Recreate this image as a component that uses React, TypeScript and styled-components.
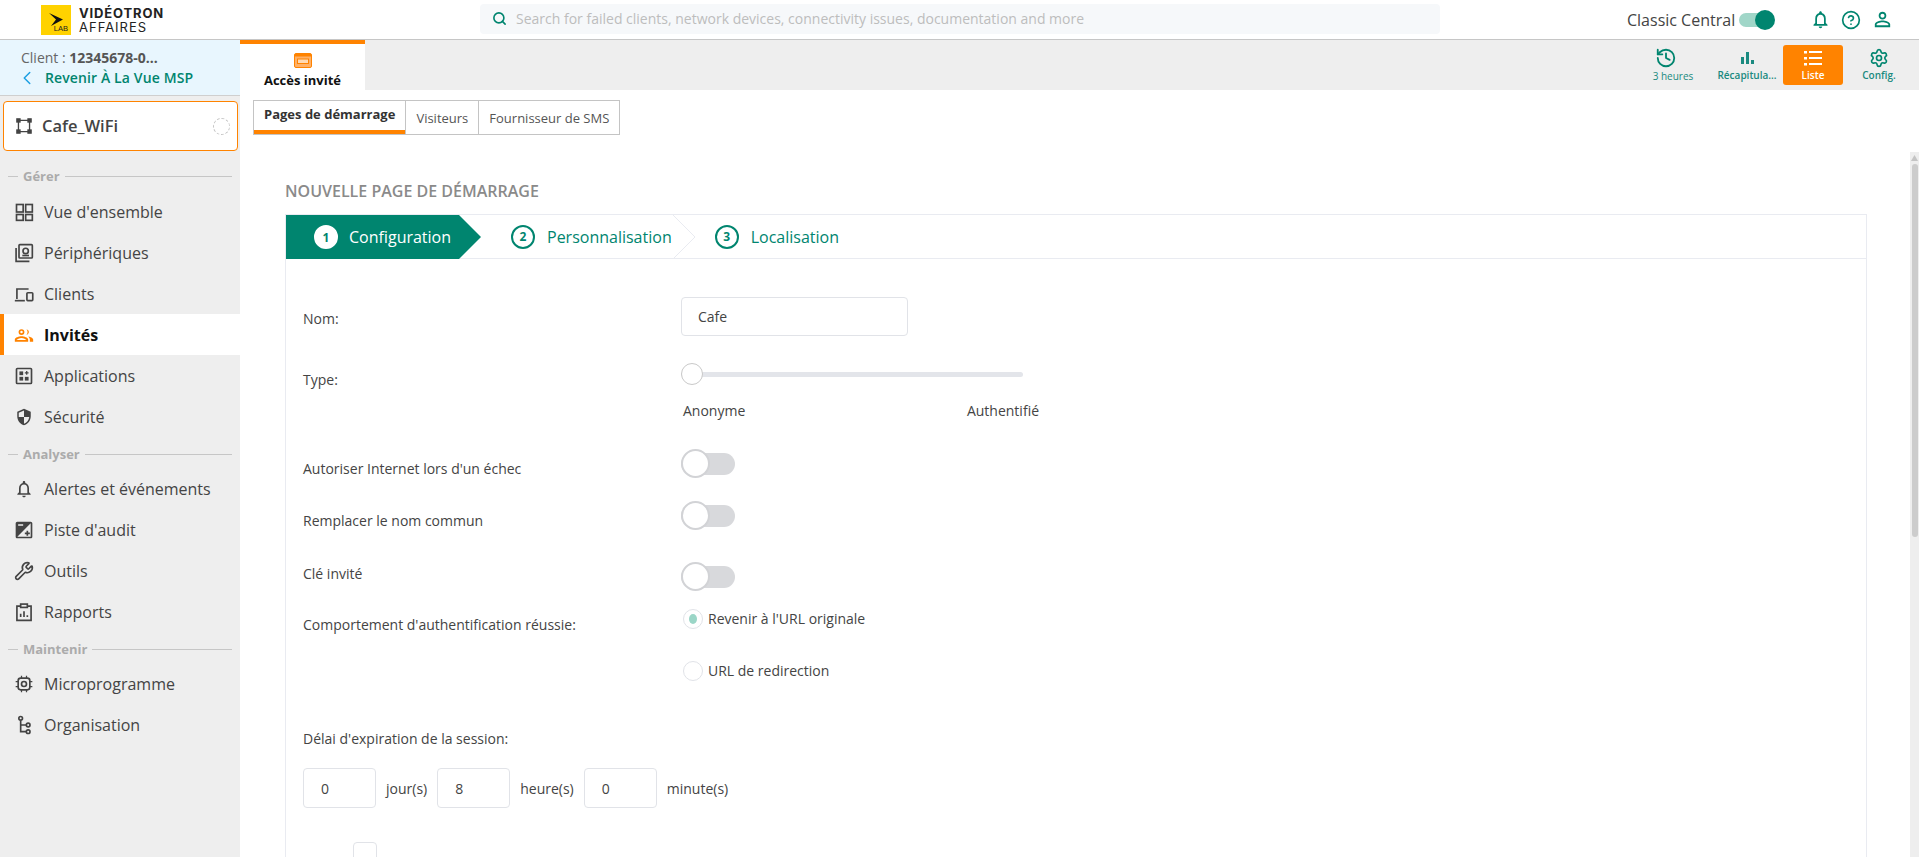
import React from "react";
import styled, { createGlobalStyle } from "styled-components";
import { History, CircleHelp, Settings, Search, Wrench, ChevronLeft } from "lucide-react";

const TEAL = "#00856f";
const ORANGE = "#ff8300";

const Global = createGlobalStyle`
  html, body { margin: 0; padding: 0; height: 100%; overflow: hidden; background: #fff; }
  body { font-family: "Open Sans", "Liberation Sans", sans-serif; color: #444; }
  * { box-sizing: border-box; }
`;

const Page = styled.div`
  display: flex;
  flex-direction: column;
  height: 100vh;
`;

const TopBar = styled.header`
  flex: 0 0 40px;
  display: flex;
  align-items: center;
  background: #fff;
  border-bottom: 1px solid #c6c6c6;
`;

const Logo = styled.div`
  display: flex;
  align-items: center;
  gap: 8px;
  width: 480px;
  padding-left: 41px;
`;

const LogoMark = styled.div`
  position: relative;
  width: 30px;
  height: 30px;
  background: #ffd200;
`;

const LogoLab = styled.span`
  position: absolute;
  right: 3px;
  bottom: 2px;
  font: 400 7.5px/8px "Liberation Sans", sans-serif;
  color: #222;
`;

const LogoWords = styled.div`
  display: flex;
  flex-direction: column;
  font-family: Inter, "Liberation Sans", sans-serif;
  color: #222;
`;

const LogoStrong = styled.span`
  font-size: 13px;
  line-height: 14px;
  font-weight: 700;
  letter-spacing: 0.85px;
`;

const LogoLight = styled.span`
  font-size: 13px;
  line-height: 14px;
  font-weight: 400;
  letter-spacing: 1px;
`;

const SearchBox = styled.div`
  width: 960px;
  height: 30px;
  margin-top: -2px;
  display: flex;
  align-items: center;
  gap: 9px;
  padding-left: 12px;
  background: #f6f8fa;
  border-radius: 4px;
  color: ${TEAL};
`;

const SearchText = styled.span`
  font-size: 14px;
  color: #bdbdbd;
`;

const TopRight = styled.div`
  margin-left: 187px;
  display: flex;
  align-items: center;
`;

const ClassicLabel = styled.span`
  font-size: 16px;
  color: #444;
  white-space: nowrap;
`;

const ClassicToggle = styled.span`
  position: relative;
  display: block;
  width: 30px;
  height: 14px;
  margin-left: 4px;
  margin-right: 41px;
  border-radius: 7px;
  background: #a0d6c8;
`;

const ClassicKnob = styled.span`
  position: absolute;
  right: -6px;
  top: -3px;
  width: 20px;
  height: 20px;
  border-radius: 50%;
  background: ${TEAL};
`;

const TopIcons = styled.div`
  display: flex;
  align-items: center;
  gap: 10px;
  color: ${TEAL};
`;

const Body = styled.div`
  flex: 1;
  min-height: 0;
  display: flex;
`;

const Sidebar = styled.aside`
  flex: 0 0 240px;
  background: #eeeeee;
`;

const ClientBox = styled.div`
  height: 56px;
  padding: 8px 0 0 21px;
  background: #e8f6fe;
  border-bottom: 1px solid #cfcfcf;
`;

const ClientLine = styled.div`
  font-size: 14px;
  line-height: 19px;
  color: #666;
  b { color: #555; font-weight: 700; font-size: 14px; }
`;

const BackLine = styled.div`
  display: flex;
  align-items: center;
  gap: 7px;
  font-size: 14px;
  line-height: 20px;
  font-weight: 600;
  letter-spacing: 0.12px;
  color: ${TEAL};
  svg { color: #1b9fe2; margin-left: -5px; }
`;

const SiteCard = styled.div`
  height: 50px;
  margin: 5px 2px 0 3px;
  padding: 0 7px 0 12px;
  display: flex;
  align-items: center;
  gap: 10px;
  background: #fff;
  border: 1px solid ${ORANGE};
  border-radius: 4px;
  font-size: 16.5px;
  font-weight: 600;
  color: #444;
`;

const SiteName = styled.span`
  flex: 1;
  margin-top: -1px;
`;

const Spinner = styled.span`
  width: 17px;
  height: 17px;
  border-radius: 50%;
  border: 1.5px dashed #c4c4c4;
`;

const NavSection = styled.div<{ $first?: boolean }>`
  display: flex;
  align-items: center;
  gap: 5px;
  height: 20px;
  margin: ${(p) => (p.$first ? "15px 8px 5px" : "7px 8px 4px")};
  font-size: 13px;
  font-weight: 700;
  color: #ababab;
  &::before { content: ""; width: 10px; height: 1px; background: #c6c6c6; }
  &::after { content: ""; flex: 1; height: 1px; background: #c6c6c6; }
`;

const NavItem = styled.div<{ $active?: boolean }>`
  height: 41px;
  display: flex;
  align-items: center;
  gap: 10px;
  padding-left: 14px;
  font-size: 16px;
  color: ${(p) => (p.$active ? "#111" : "#444")};
  font-weight: ${(p) => (p.$active ? 700 : 400)};
  background: ${(p) => (p.$active ? "#fff" : "transparent")};
  box-shadow: ${(p) => (p.$active ? `inset 4px 0 0 ${ORANGE}` : "none")};
  svg { color: ${(p) => (p.$active ? ORANGE : "#444")}; flex: 0 0 20px; }
`;

const Main = styled.main`
  flex: 1;
  min-width: 0;
  display: flex;
  flex-direction: column;
`;

const AppBar = styled.div`
  flex: 0 0 50px;
  display: flex;
  justify-content: space-between;
  background: #eeeeee;
`;

const AppTab = styled.div`
  width: 125px;
  display: flex;
  flex-direction: column;
  align-items: center;
  border-top: 4px solid ${ORANGE};
  padding-top: 9px;
  background: #fff;
  font-size: 13px;
  line-height: 18px;
  font-weight: 700;
  color: #111;
  svg { color: ${ORANGE}; margin-bottom: 3px; }
`;

const ToolGroup = styled.div`
  display: flex;
  align-items: center;
  gap: 6px;
  padding-right: 10px;
`;

const ToolButton = styled.div<{ $active?: boolean; $light?: boolean; $spaced?: boolean }>`
  width: 60px;
  height: 40px;
  margin-right: ${(p) => (p.$spaced ? "8px" : "0")};
  display: flex;
  flex-direction: column;
  align-items: center;
  justify-content: center;
  border-radius: 3px;
  background: ${(p) => (p.$active ? ORANGE : "transparent")};
  color: ${(p) => (p.$active ? "#fff" : "#1a8a80")};
  font-size: 10px;
  line-height: 14px;
  font-weight: ${(p) => (p.$light ? 400 : 600)};
  white-space: nowrap;
`;

const OffsetHistory = styled(History)`
  margin-left: -14px;
`;

const Content = styled.div`
  flex: 1;
  min-height: 0;
  display: flex;
  flex-direction: column;
`;

const SubTabs = styled.div`
  flex: 0 0 62px;
  padding: 10px 0 0 13px;
`;

const SubTabList = styled.div`
  display: inline-flex;
  height: 35px;
  border: 1px solid #c4c4c4;
`;

const SubTab = styled.div<{ $active?: boolean }>`
  display: flex;
  align-items: center;
  padding: ${(p) => (p.$active ? "0 10px 4px" : "0 10px")};
  border-left: ${(p) => (p.$active ? "none" : "1px solid #c4c4c4")};
  border-bottom: ${(p) => (p.$active ? `4px solid ${ORANGE}` : "none")};
  font-size: 13px;
  color: ${(p) => (p.$active ? "#333" : "#555")};
  font-weight: ${(p) => (p.$active ? 700 : 400)};
`;

const ScrollRow = styled.div`
  flex: 1;
  min-height: 0;
  display: flex;
`;

const ScrollArea = styled.div`
  flex: 1;
  min-width: 0;
  overflow: hidden;
  padding: 0 43px 0 45px;
`;

const ScrollTrack = styled.div`
  flex: 0 0 9px;
  display: flex;
  flex-direction: column;
  align-items: center;
  background: #eeeeee;
  padding-top: 3px;
  color: #c4c4c4;
`;

const ScrollThumb = styled.div`
  width: 6px;
  height: 373px;
  margin-top: 3px;
  border-radius: 3px;
  background: #cccccc;
`;

const Heading = styled.h2`
  margin: 29px 0 13px;
  font-size: 16px;
  line-height: 20px;
  font-weight: 600;
  color: #8a8a8a;
`;

const Wizard = styled.section`
  min-height: 1225px;
  border: 1px solid #e9ebf1;
`;

const StepBar = styled.div`
  height: 44px;
  display: flex;
  align-items: center;
  border-bottom: 1px solid #e9ebf1;
  color: ${TEAL};
  font-size: 16px;
`;

const ActiveStep = styled.div`
  align-self: stretch;
  flex: 0 0 195px;
  display: flex;
  align-items: center;
  gap: 11px;
  padding-left: 28px;
  margin-bottom: -1px;
  background: ${TEAL};
  color: #fff;
  clip-path: polygon(0 0, 173px 0, 100% 50%, 173px 100%, 0 100%);
`;

const Step = styled.div<{ $left: number }>`
  display: flex;
  align-items: center;
  gap: 12px;
  margin-left: ${(p) => p.$left}px;
`;

const StepNumber = styled.span<{ $inverse?: boolean }>`
  width: 24px;
  height: 24px;
  display: flex;
  align-items: center;
  justify-content: center;
  border-radius: 50%;
  border: 2px solid ${(p) => (p.$inverse ? "#fff" : TEAL)};
  background: ${(p) => (p.$inverse ? "#fff" : "transparent")};
  color: ${TEAL};
  font-size: 12px;
  font-weight: 700;
`;

const StepChevron = styled.svg`
  flex: 0 0 23px;
  margin-left: 1px;
`;

const Form = styled.div`
  padding: 38px 0 0 17px;
  font-size: 14px;
  color: #444;
`;

const Row = styled.div<{ $top?: number }>`
  display: grid;
  grid-template-columns: 378px 1fr;
  align-items: start;
  margin-top: ${(p) => p.$top ?? 0}px;
`;

const Label = styled.label<{ $pad: number }>`
  padding-top: ${(p) => p.$pad}px;
  line-height: 20px;
  white-space: nowrap;
`;

const TextField = styled.div`
  width: 227px;
  height: 39px;
  padding-left: 16px;
  display: flex;
  align-items: center;
  border: 1px solid #e1e3e8;
  border-radius: 4px;
`;

const Slider = styled.div`
  position: relative;
  width: 342px;
  height: 22px;
  display: flex;
  align-items: center;
`;

const SliderTrack = styled.div`
  width: 100%;
  height: 5px;
  background: #e3e5ea;
  border-radius: 3px;
`;

const SliderThumb = styled.span`
  position: absolute;
  left: 0;
  top: 0;
  width: 22px;
  height: 22px;
  border-radius: 50%;
  background: #fff;
  border: 1px solid #c9c9c9;
`;

const SliderLabels = styled.div`
  width: 358px;
  margin-top: 16px;
  padding-left: 2px;
  display: flex;
  justify-content: space-between;
  line-height: 20px;
`;

const Toggle = styled.div`
  position: relative;
  width: 54px;
  height: 29px;
  display: flex;
  align-items: center;
`;

const ToggleTrack = styled.div`
  width: 100%;
  height: 22px;
  border-radius: 11px;
  background: #d8d9dc;
`;

const ToggleKnob = styled.span`
  position: absolute;
  left: 0;
  top: 0;
  width: 29px;
  height: 29px;
  border-radius: 50%;
  background: #fff;
  border: 2px solid #d2d3d6;
`;

const RadioGroup = styled.div`
  display: flex;
  flex-direction: column;
  gap: 32px;
  padding-left: 2px;
`;

const RadioLine = styled.div`
  display: flex;
  align-items: center;
  gap: 5px;
  height: 20px;
  line-height: 20px;
`;

const Radio = styled.span<{ $checked?: boolean }>`
  width: 20px;
  height: 20px;
  display: flex;
  align-items: center;
  justify-content: center;
  border-radius: 50%;
  border: 1px solid #e1e3e8;
  &::after {
    content: "";
    display: ${(p) => (p.$checked ? "block" : "none")};
    width: 8px;
    height: 10px;
    border-radius: 50%;
    background: #9bd6c7;
  }
`;

const PlainLabel = styled.div`
  margin-top: 48px;
  line-height: 20px;
`;

const DurationRow = styled.div`
  display: flex;
  align-items: center;
  gap: 10px;
  margin-top: 19px;
`;

const DurationField = styled.div`
  width: 73px;
  height: 40px;
  padding-left: 17px;
  display: flex;
  align-items: center;
  border: 1px solid #e1e3e8;
  border-radius: 4px;
`;

const CheckBox = styled.div`
  width: 24px;
  height: 24px;
  margin: 34px 0 0 50px;
  border: 1px solid #e1e3e8;
  border-radius: 4px;
`;

type IconProps = { size?: number };
const Svg = ({ size = 20, children, fill = "none" }: IconProps & { children: React.ReactNode; fill?: string }) => (
  <svg width={size} height={size} viewBox="0 0 24 24" fill={fill} stroke={fill === "none" ? "currentColor" : "none"} strokeWidth="2">
    {children}
  </svg>
);

const DashIcon = () => (
  <Svg>
    <rect x="3" y="3" width="8" height="9" />
    <rect x="14" y="3" width="8" height="9" />
    <rect x="3" y="15" width="8" height="7" />
    <rect x="14" y="15" width="8" height="7" />
  </Svg>
);
const DevicesIcon = () => (
  <Svg>
    <rect x="6" y="2" width="16" height="16" rx="1" />
    <circle cx="14" cy="9.5" r="3.2" />
    <path d="M10 15h8" />
    <path d="M2.5 6v16h16" />
  </Svg>
);
const ClientsIcon = () => (
  <Svg>
    <path d="M3.5 18V6h14" />
    <path d="M1 20h12" />
    <rect x="15.5" y="10.5" width="7" height="9.5" rx="1" />
  </Svg>
);
const GuestsIcon = () => (
  <Svg fill="currentColor">
    <path d="M9 5a3.5 3.5 0 1 0 0 7 3.5 3.5 0 0 0 0-7zm0 2a1.5 1.5 0 1 1 0 3 1.5 1.5 0 0 1 0-3z" />
    <path d="M15 5.1c1.6.4 2.8 1.8 2.8 3.4s-1.2 3-2.8 3.4c.8-.9 1.3-2.1 1.3-3.4S15.8 6 15 5.1z" />
    <path d="M9 13.5c-3 0-8 1.5-8 4V20h16v-2.500c0-2.500-5-4-8-4zM3 18c.5-1 3.700-2.500 6-2.500s5.500 1.500 6 2.500H3z" />
    <path d="M17 13.700c2.600.4 6 1.500 6 3.800V20h-4v-2.500c0-1.500-.8-2.800-2-3.800z" />
  </Svg>
);
const AppsIcon = () => (
  <svg width="20" height="20" viewBox="0 0 24 24">
    <rect x="3" y="3" width="18" height="18" rx="1" fill="none" stroke="currentColor" strokeWidth="2" />
    <g fill="currentColor">
      <rect x="6.5" y="6.5" width="4.5" height="4.5" />
      <rect x="6.5" y="13" width="4.5" height="4.5" />
      <rect x="13" y="13" width="4.5" height="4.5" />
      <path d="M14.5 6h1.500v1.500h1.500v1.500H16v1.500h-1.500V9H13V7.500h1.500z" />
    </g>
  </svg>
);
const ShieldIcon = () => (
  <Svg size={18} fill="currentColor">
    <path d="M12 1 3 5v6c0 5.550 3.840 10.740 9 12 5.160-1.260 9-6.450 9-12V5l-9-4zm0 10.990h7c-.530 4.120-3.280 7.790-7 8.940V12H5V6.300l7-3.110v8.800z" />
  </Svg>
);
const BellPath = "M12 22c1.100 0 2-.900 2-2h-4c0 1.100.900 2 2 2zm6-6v-5c0-3.070-1.630-5.640-4.500-6.320V4c0-.830-.670-1.500-1.500-1.500s-1.500.670-1.500 1.500v.680C7.640 5.360 6 7.920 6 11v5l-2 2v1h16v-1l-2-2zm-2 1H8v-6c0-2.480 1.510-4.500 4-4.500s4 2.020 4 4.500v6z";
const BellIcon = ({ size = 20 }: IconProps) => (
  <Svg size={size} fill="currentColor">
    <path d={BellPath} />
  </Svg>
);
const AuditIcon = () => (
  <Svg fill="currentColor">
    <path d="M15 17v2h2v-2h2v-2h-2v-2h-2v2h-2v2h2zm5-15H4c-1.100 0-2 .900-2 2v16c0 1.100.900 2 2 2h16c1.100 0 2-.900 2-2V4c0-1.100-.900-2-2-2zM5 5h6v2H5V5zm15 15H4L20 4v16z" />
  </Svg>
);
const ReportIcon = () => (
  <Svg>
    <path d="M8 5H3.500v17h17V5H16" />
    <rect x="8" y="2.500" width="8" height="4" />
    <path d="M8 18v-4M12 18v-7M16 18v-2" />
  </Svg>
);
const ChipIcon = () => (
  <Svg>
    <rect x="5" y="5" width="14" height="14" rx="3" />
    <circle cx="12" cy="12" r="3" />
    <path d="M9 2v3M15 2v3M9 19v3M15 19v3M2 9h3M2 15h3M19 9h3M19 15h3" strokeWidth="1.500" />
  </Svg>
);
const OrgIcon = () => (
  <Svg>
    <circle cx="8" cy="4" r="2.200" />
    <circle cx="17" cy="12" r="2.200" />
    <circle cx="17" cy="20" r="2.200" />
    <path d="M8 6.500V20h6.500M8 12h6.500" />
  </Svg>
);
const NetIcon = () => (
  <svg width="16" height="16" viewBox="0 0 18 18" fill="none" stroke="currentColor" strokeWidth="1.500">
    <rect x="1" y="1" width="3.500" height="3.500" fill="#444" />
    <rect x="13.500" y="1" width="3.500" height="3.500" fill="#444" />
    <rect x="1" y="13.500" width="3.500" height="3.500" fill="#444" />
    <rect x="13.500" y="13.500" width="3.500" height="3.500" fill="#444" />
    <path d="M4.500 2.750h9M4.500 15.250h9M2.750 4.500v9M15.250 4.500v9" />
  </svg>
);
const PortalIcon = () => (
  <svg width="18" height="15" viewBox="0 0 18 15">
    <rect x="0.5" y="0.5" width="17" height="14" rx="1.500" fill="#ffb066" stroke="currentColor" />
    <rect x="1" y="1" width="16" height="2.500" fill="currentColor" />
    <rect x="3.5" y="6" width="11" height="4.500" fill="#ffd9b3" stroke="currentColor" />
  </svg>
);
const UserIcon = ({ size = 20 }: IconProps) => (
  <Svg size={size} fill="currentColor">
    <path d="M12 5.900c1.160 0 2.100.940 2.100 2.100s-.940 2.100-2.100 2.100S9.900 9.160 9.900 8s.940-2.100 2.100-2.100m0 9c2.970 0 6.100 1.460 6.100 2.100v1.100H5.900V17c0-.640 3.130-2.100 6.100-2.100M12 4C9.790 4 8 5.790 8 8s1.790 4 4 4 4-1.790 4-4-1.790-4-4-4zm0 9c-2.670 0-8 1.340-8 4v3h16v-3c0-2.660-5.330-4-8-4z" />
  </Svg>
);
const BarsIcon = () => (
  <svg width="20" height="20" viewBox="0 0 20 20" fill="currentColor">
    <rect x="4" y="9" width="3" height="7" />
    <rect x="9" y="4" width="3" height="12" />
    <rect x="14" y="12" width="3" height="4" />
  </svg>
);
const ListIcon = () => (
  <svg width="20" height="20" viewBox="0 0 20 20" fill="currentColor">
    <rect x="1" y="3" width="3" height="2.500" />
    <rect x="6" y="3" width="13" height="2" />
    <rect x="1" y="9" width="3" height="2.500" />
    <rect x="6" y="9" width="13" height="2" />
    <rect x="1" y="15" width="3" height="2.500" />
    <rect x="6" y="15" width="13" height="2" />
  </svg>
);

const navTop = [
  { label: "Vue d'ensemble", icon: <DashIcon /> },
  { label: "Périphériques", icon: <DevicesIcon /> },
  { label: "Clients", icon: <ClientsIcon /> },
  { label: "Invités", icon: <GuestsIcon />, active: true },
  { label: "Applications", icon: <AppsIcon /> },
  { label: "Sécurité", icon: <ShieldIcon /> },
];
const navMid = [
  { label: "Alertes et événements", icon: <BellIcon /> },
  { label: "Piste d'audit", icon: <AuditIcon /> },
  { label: "Outils", icon: <Wrench size={20} strokeWidth={2} /> },
  { label: "Rapports", icon: <ReportIcon /> },
];
const navBottom = [
  { label: "Microprogramme", icon: <ChipIcon /> },
  { label: "Organisation", icon: <OrgIcon /> },
];

type NavEntry = { label: string; icon: React.ReactNode; active?: boolean };
const NavList = ({ items }: { items: NavEntry[] }) => (
  <>
    {items.map((n) => (
      <NavItem key={n.label} $active={n.active}>
        {n.icon}
        {n.label}
      </NavItem>
    ))}
  </>
);

const SwitchRow = ({ label, top, pad }: { label: string; top: number; pad: number }) => (
  <Row $top={top}>
    <Label $pad={pad}>{label}</Label>
    <Toggle>
      <ToggleTrack />
      <ToggleKnob />
    </Toggle>
  </Row>
);

export default function App() {
  return (
    <Page>
      <Global />
      <TopBar>
        <Logo>
          <LogoMark>
            <svg width="30" height="30" viewBox="0 0 30 30">
              <path d="M8 8 L22 14.5 L10 21 L15 14.5 Z" fill="#111" />
            </svg>
            <LogoLab>LAB</LogoLab>
          </LogoMark>
          <LogoWords>
            <LogoStrong>VIDÉOTRON</LogoStrong>
            <LogoLight>AFFAIRES</LogoLight>
          </LogoWords>
        </Logo>
        <SearchBox>
          <Search size={15} strokeWidth={2.6} />
          <SearchText>Search for failed clients, network devices, connectivity issues, documentation and more</SearchText>
        </SearchBox>
        <TopRight>
          <ClassicLabel>Classic Central</ClassicLabel>
          <ClassicToggle>
            <ClassicKnob />
          </ClassicToggle>
          <TopIcons>
            <BellIcon size={21} />
            <CircleHelp size={20} strokeWidth={2} />
            <UserIcon size={23} />
          </TopIcons>
        </TopRight>
      </TopBar>
      <Body>
        <Sidebar>
          <ClientBox>
            <ClientLine>
              Client : <b>12345678-0...</b>
            </ClientLine>
            <BackLine>
              <ChevronLeft size={22} strokeWidth={1.6} />
              Revenir À La Vue MSP
            </BackLine>
          </ClientBox>
          <SiteCard>
            <NetIcon />
            <SiteName>Cafe_WiFi</SiteName>
            <Spinner />
          </SiteCard>
          <NavSection $first>Gérer</NavSection>
          <NavList items={navTop} />
          <NavSection>Analyser</NavSection>
          <NavList items={navMid} />
          <NavSection>Maintenir</NavSection>
          <NavList items={navBottom} />
        </Sidebar>
        <Main>
          <AppBar>
            <AppTab>
              <PortalIcon />
              Accès invité
            </AppTab>
            <ToolGroup>
              <ToolButton $light $spaced>
                <OffsetHistory size={22} strokeWidth={2} color={TEAL} />3 heures
              </ToolButton>
              <ToolButton>
                <BarsIcon />
                Récapitula...
              </ToolButton>
              <ToolButton $active>
                <ListIcon />
                Liste
              </ToolButton>
              <ToolButton>
                <Settings size={20} strokeWidth={2} color={TEAL} />
                Config.
              </ToolButton>
            </ToolGroup>
          </AppBar>
          <Content>
            <SubTabs>
              <SubTabList>
                <SubTab $active>Pages de démarrage</SubTab>
                <SubTab>Visiteurs</SubTab>
                <SubTab>Fournisseur de SMS</SubTab>
              </SubTabList>
            </SubTabs>
            <ScrollRow>
              <ScrollArea>
                <Heading>NOUVELLE PAGE DE DÉMARRAGE</Heading>
                <Wizard>
                  <StepBar>
                    <ActiveStep>
                      <StepNumber $inverse>1</StepNumber>
                      Configuration
                    </ActiveStep>
                    <Step $left={30}>
                      <StepNumber>2</StepNumber>
                      Personnalisation
                    </Step>
                    <StepChevron width="23" height="44" viewBox="0 0 23 44" fill="none" stroke="#e9ebf1">
                      <path d="M0 0 L22 22 L0 44" />
                    </StepChevron>
                    <Step $left={19}>
                      <StepNumber>3</StepNumber>
                      Localisation
                    </Step>
                  </StepBar>
                  <Form>
                    <Row>
                      <Label $pad={12}>Nom:</Label>
                      <TextField>Cafe</TextField>
                    </Row>
                    <Row $top={27}>
                      <Label $pad={7}>Type:</Label>
                      <div>
                        <Slider>
                          <SliderTrack />
                          <SliderThumb />
                        </Slider>
                        <SliderLabels>
                          <span>Anonyme</span>
                          <span>Authentifié</span>
                        </SliderLabels>
                      </div>
                    </Row>
                    <SwitchRow label="Autoriser Internet lors d'un échec" top={28} pad={10} />
                    <SwitchRow label="Remplacer le nom commun" top={22} pad={10} />
                    <SwitchRow label="Clé invité" top={31} pad={2} />
                    <Row $top={18}>
                      <Label $pad={6}>Comportement d'authentification réussie:</Label>
                      <RadioGroup>
                        <RadioLine>
                          <Radio $checked />
                          Revenir à l'URL originale
                        </RadioLine>
                        <RadioLine>
                          <Radio />
                          URL de redirection
                        </RadioLine>
                      </RadioGroup>
                    </Row>
                    <PlainLabel>Délai d'expiration de la session:</PlainLabel>
                    <DurationRow>
                      <DurationField>0</DurationField>
                      <span>jour(s)</span>
                      <DurationField>8</DurationField>
                      <span>heure(s)</span>
                      <DurationField>0</DurationField>
                      <span>minute(s)</span>
                    </DurationRow>
                    <CheckBox />
                  </Form>
                </Wizard>
              </ScrollArea>
              <ScrollTrack>
                <svg width="7" height="6" viewBox="0 0 7 6" fill="currentColor">
                  <path d="M3.5 0 L7 6 H0 Z" />
                </svg>
                <ScrollThumb />
              </ScrollTrack>
            </ScrollRow>
          </Content>
        </Main>
      </Body>
    </Page>
  );
}
